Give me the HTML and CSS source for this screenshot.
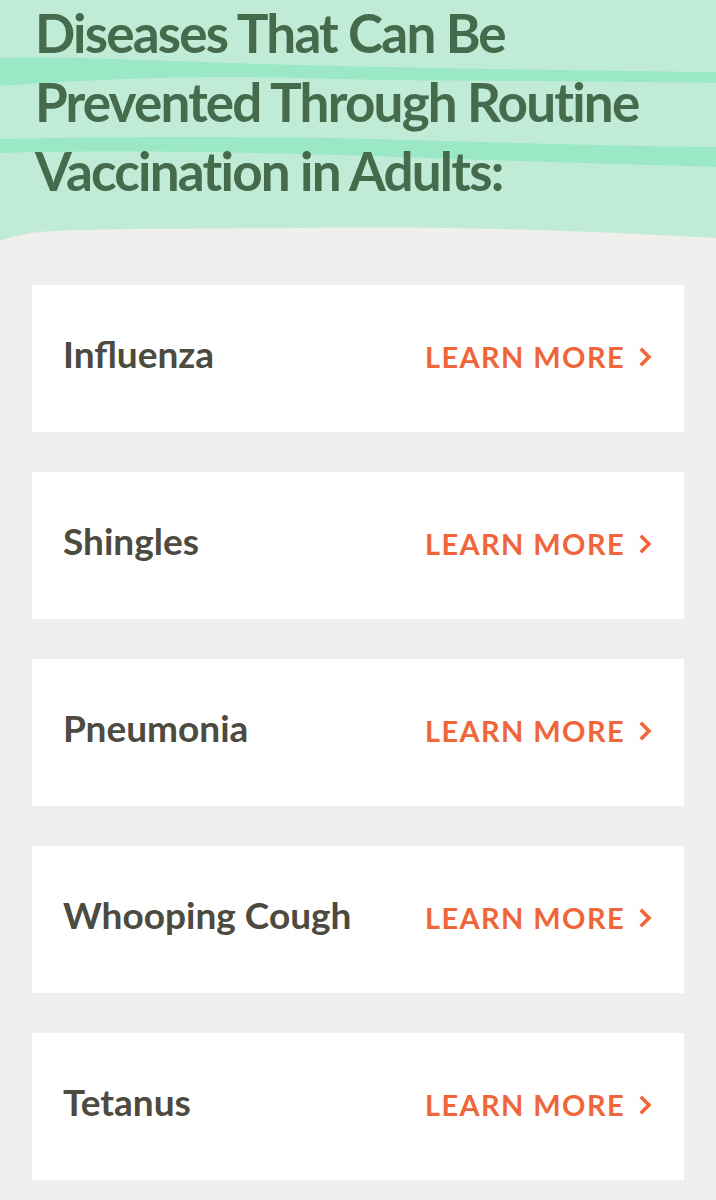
FILE: index.html
```html
<!DOCTYPE html>
<html lang="en">
<head>
<meta charset="utf-8">
<link rel="stylesheet" href="styles.css">
</head>
<body>
<header class="hero">
  <svg class="hero-bg" viewBox="0 0 716 250" preserveAspectRatio="none" aria-hidden="true">
    <path d="M0 0 H716 V238 C600 232 480 226 300 228 C200 229 100 228 40 232 C20 234 8 238 0 241 Z" fill="#c0ecd7"/>
    <path d="M0 58 C60 56 140 60 260 64 C400 68 560 70 716 72 V83 C560 80 420 82 300 78 C200 75 80 80 0 86 Z" fill="#9ae8c6"/>
    <path d="M0 139 C80 137 200 136 330 138 C460 141 600 146 716 147 V167 C600 163 500 161 400 157 C260 152 120 150 0 153 Z" fill="#9ae8c6"/>
  </svg>
  <h1 class="hero-title">Diseases That Can Be Prevented Through Routine Vaccination in Adults:</h1>
</header>
<main class="list">
  <a class="card" href="#"><span class="card-name">Influenza</span><span class="card-link">LEARN MORE <svg class="chev" viewBox="0 0 14 20"><path d="M3 3 L10 10 L3 17" fill="none" stroke="currentColor" stroke-width="3.6" stroke-linecap="square"/></svg></span></a>
  <a class="card" href="#"><span class="card-name">Shingles</span><span class="card-link">LEARN MORE <svg class="chev" viewBox="0 0 14 20"><path d="M3 3 L10 10 L3 17" fill="none" stroke="currentColor" stroke-width="3.6" stroke-linecap="square"/></svg></span></a>
  <a class="card" href="#"><span class="card-name">Pneumonia</span><span class="card-link">LEARN MORE <svg class="chev" viewBox="0 0 14 20"><path d="M3 3 L10 10 L3 17" fill="none" stroke="currentColor" stroke-width="3.6" stroke-linecap="square"/></svg></span></a>
  <a class="card" href="#"><span class="card-name">Whooping Cough</span><span class="card-link">LEARN MORE <svg class="chev" viewBox="0 0 14 20"><path d="M3 3 L10 10 L3 17" fill="none" stroke="currentColor" stroke-width="3.6" stroke-linecap="square"/></svg></span></a>
  <a class="card" href="#"><span class="card-name">Tetanus</span><span class="card-link">LEARN MORE <svg class="chev" viewBox="0 0 14 20"><path d="M3 3 L10 10 L3 17" fill="none" stroke="currentColor" stroke-width="3.6" stroke-linecap="square"/></svg></span></a>
</main>
</body>
</html>
```
FILE: styles.css
```css
* { box-sizing: border-box; }
html, body { margin: 0; padding: 0; }
body {
  background: #f0efee;
  font-family: Lato, "Noto Sans", sans-serif;
  width: 716px;
  height: 1200px;
  overflow: hidden;
}
.hero {
  position: relative;
  display: flex;
  flex-direction: column;
  height: 244px;
  padding: 0 20px 0 35px;
}
.hero-bg {
  position: absolute;
  inset: 0;
  width: 100%;
  height: 250px;
  z-index: 0;
}
.hero-title {
  position: relative;
  z-index: 1;
  margin: -2px 0 0 0;
  color: #456b4c;
  font-size: 53px;
  line-height: 69px;
  font-weight: 700;
  letter-spacing: -1.8px;
}
.list {
  display: flex;
  flex-direction: column;
  gap: 40px;
  padding: 41px 32px 0 32px;
}
.card {
  display: flex;
  align-items: center;
  justify-content: space-between;
  height: 147px;
  background: #ffffff;
  padding: 0 31px 0 31px;
  text-decoration: none;
}
.card-name {
  color: #4d4a3f;
  font-size: 37px;
  font-weight: 700;
  padding-bottom: 10px;
}
.card-link {
  display: flex;
  align-items: center;
  gap: 14px;
  color: #f0663a;
  font-size: 29px;
  font-weight: 700;
  letter-spacing: 1.4px;
  padding-bottom: 4px;
}
.chev {
  width: 14px;
  height: 20px;
}
```
